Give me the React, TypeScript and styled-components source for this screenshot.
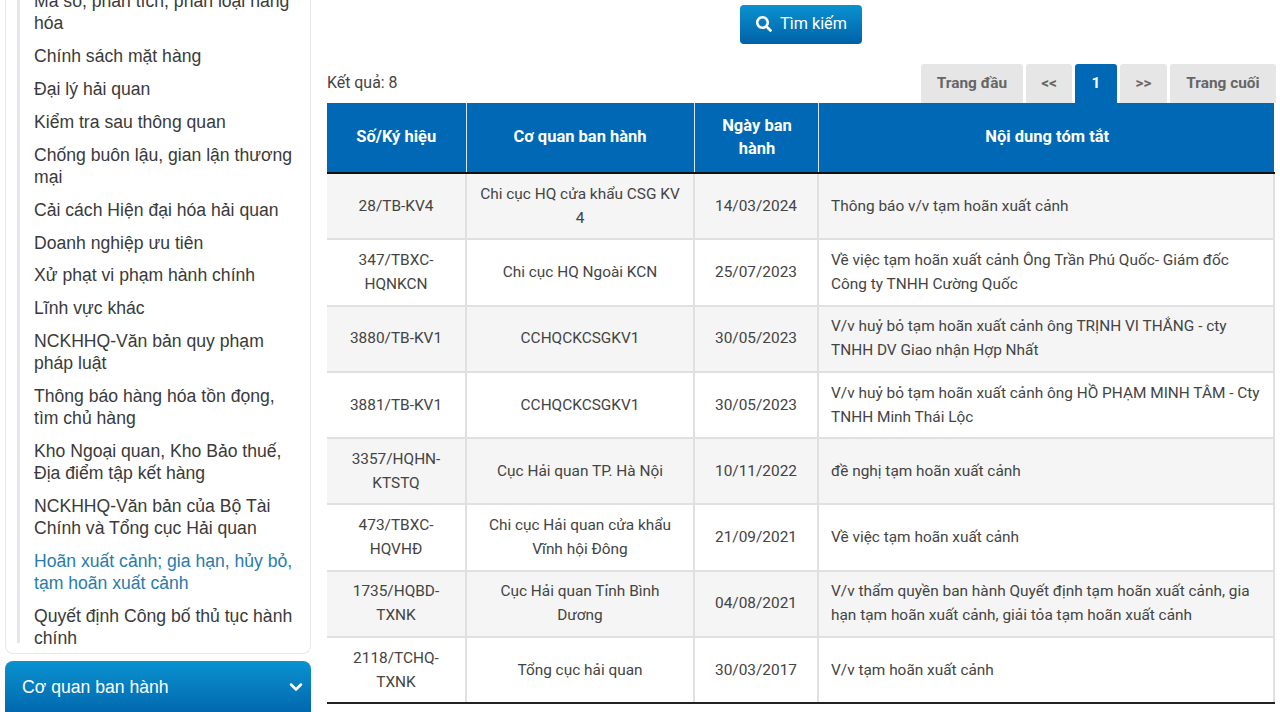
import styled, { createGlobalStyle } from 'styled-components'
import { FaSearch } from 'react-icons/fa'
import { FiChevronDown } from 'react-icons/fi'

const categories = [
    'Mã số, phân tích, phân loại hàng hóa',
    'Chính sách mặt hàng',
    'Đại lý hải quan',
    'Kiểm tra sau thông quan',
    'Chống buôn lậu, gian lận thương mại',
    'Cải cách Hiện đại hóa hải quan',
    'Doanh nghiệp ưu tiên',
    'Xử phạt vi phạm hành chính',
    'Lĩnh vực khác',
    'NCKHHQ-Văn bản quy phạm pháp luật',
    'Thông báo hàng hóa tồn đọng, tìm chủ hàng',
    'Kho Ngoại quan, Kho Bảo thuế, Địa điểm tập kết hàng',
    'NCKHHQ-Văn bản của Bộ Tài Chính và Tổng cục Hải quan',
    'Hoãn xuất cảnh; gia hạn, hủy bỏ, tạm hoãn xuất cảnh',
    'Quyết định Công bố thủ tục hành chính',
]

const ACTIVE_CATEGORY = 'Hoãn xuất cảnh; gia hạn, hủy bỏ, tạm hoãn xuất cảnh'

const pages = [
    { label: 'Trang đầu', width: 102 },
    { label: '<<', width: 46 },
    { label: '1', width: 42, active: true },
    { label: '>>', width: 47 },
    { label: 'Trang cuối', width: 106 },
]

const rows = [
    ['28/TB-KV4', 'Chi cục HQ cửa khẩu CSG KV 4', '14/03/2024', 'Thông báo v/v tạm hoãn xuất cảnh'],
    ['347/TBXC-HQNKCN', 'Chi cục HQ Ngoài KCN', '25/07/2023', 'Về việc tạm hoãn xuất cảnh Ông Trần Phú Quốc- Giám đốc Công ty TNHH Cường Quốc'],
    ['3880/TB-KV1', 'CCHQCKCSGKV1', '30/05/2023', 'V/v huỷ bỏ tạm hoãn xuất cảnh ông TRỊNH VI THẮNG - cty TNHH DV Giao nhận Hợp Nhất'],
    ['3881/TB-KV1', 'CCHQCKCSGKV1', '30/05/2023', 'V/v huỷ bỏ tạm hoãn xuất cảnh ông HỒ PHẠM MINH TÂM - Cty TNHH Minh Thái Lộc'],
    ['3357/HQHN-KTSTQ', 'Cục Hải quan TP. Hà Nội', '10/11/2022', 'đề nghị tạm hoãn xuất cảnh'],
    ['473/TBXC-HQVHĐ', 'Chi cục Hải quan cửa khẩu Vĩnh hội Đông', '21/09/2021', 'Về việc tạm hoãn xuất cảnh'],
    ['1735/HQBD-TXNK', 'Cục Hải quan Tỉnh Bình Dương', '04/08/2021', 'V/v thẩm quyền ban hành Quyết định tạm hoãn xuất cảnh, gia hạn tạm hoãn xuất cảnh, giải tỏa tạm hoãn xuất cảnh'],
    ['2118/TCHQ-TXNK', 'Tổng cục hải quan', '30/03/2017', 'V/v tạm hoãn xuất cảnh'],
]

export default function App() {
    return (
        <Page>
            <GlobalStyle />
            <Sidebar>
                <CategoryCard>
                    <CategoryList>
                        {categories.map((name) => (
                            <CategoryItem key={name} $active={name === ACTIVE_CATEGORY}>
                                {name}
                            </CategoryItem>
                        ))}
                    </CategoryList>
                </CategoryCard>
                <AccordionHeader>
                    Cơ quan ban hành
                    <FiChevronDown size={20} strokeWidth={3} />
                </AccordionHeader>
            </Sidebar>
            <Main>
                <SearchRow>
                    <SearchButton>
                        <FaSearch size={16} />
                        Tìm kiếm
                    </SearchButton>
                </SearchRow>
                <Toolbar>
                    <ResultCount>Kết quả: 8</ResultCount>
                    <Pagination>
                        {pages.map((page) => (
                            <PageTab key={page.label} $active={page.active} $width={page.width}>
                                {page.label}
                            </PageTab>
                        ))}
                    </Pagination>
                </Toolbar>
                <ResultTable>
                    <colgroup>
                        <col width={139} />
                        <col width={228} />
                        <col width={124} />
                        <col />
                    </colgroup>
                    <thead>
                        <tr>
                            <HeadCell>Số/Ký hiệu</HeadCell>
                            <HeadCell>Cơ quan ban hành</HeadCell>
                            <HeadCell>Ngày ban hành</HeadCell>
                            <HeadCell>Nội dung tóm tắt</HeadCell>
                        </tr>
                    </thead>
                    <tbody>
                        {rows.map((row) => (
                            <Row key={row[0]}>
                                <Cell>{row[0]}</Cell>
                                <Cell>{row[1]}</Cell>
                                <Cell>{row[2]}</Cell>
                                <SummaryCell>{row[3]}</SummaryCell>
                            </Row>
                        ))}
                    </tbody>
                </ResultTable>
            </Main>
        </Page>
    )
}

const GlobalStyle = createGlobalStyle`
    html, body {
        margin: 0;
        height: 712px;
        overflow: hidden;
        background: #fff;
    }
    * {
        box-sizing: border-box;
    }
`

const Page = styled.div`
    display: flex;
    align-items: flex-start;
    gap: 16px;
    width: 1280px;
    height: 712px;
    padding-left: 5px;
    overflow: hidden;
`

const Sidebar = styled.aside`
    display: flex;
    flex-direction: column;
    gap: 7px;
    flex: none;
    width: 306px;
    margin-top: -10px;
`

const CategoryCard = styled.div`
    flex: none;
    height: 664px;
    padding-left: 11px;
    padding-right: 8px;
    background: #fff;
    border: 1px solid #e8e8e8;
    border-top: 0;
    border-radius: 0 0 8px 8px;
`

const CategoryList = styled.ul`
    height: 653px;
    margin: 0;
    padding: 0 0 0 14px;
    list-style: none;
    border-left: 3px solid #e3e6ea;
`

const CategoryItem = styled.li<{ $active?: boolean }>`
    margin-bottom: 10.93px;
    font-family: 'Liberation Sans', Arial, sans-serif;
    font-size: 17.6px;
    line-height: 22px;
    color: ${(p) => (p.$active ? '#2a7bab' : '#3a3a3a')};
`

const AccordionHeader = styled.div`
    display: flex;
    align-items: center;
    justify-content: space-between;
    flex: none;
    height: 60px;
    padding: 0 5px 8px 17px;
    font-family: 'Liberation Sans', Arial, sans-serif;
    font-size: 17.6px;
    color: #fff;
    background: linear-gradient(#0a92d0, #0061a8);
    border-radius: 8px 8px 0 0;
`

const Main = styled.main`
    flex: none;
    width: 948px;
    font-family: Roboto, sans-serif;
    font-size: 15.4px;
    color: #444;
`

const SearchRow = styled.div`
    display: flex;
    justify-content: center;
    padding-top: 5px;
`

const SearchButton = styled.button`
    display: flex;
    align-items: center;
    justify-content: center;
    gap: 8px;
    width: 122px;
    height: 39px;
    padding: 0 0 2px 1px;
    font-family: Roboto, sans-serif;
    font-size: 16.2px;
    color: #fff;
    background: linear-gradient(#0a92d0, #0061a8);
    border: 0;
    border-radius: 4px;
`

const Toolbar = styled.div`
    display: flex;
    align-items: flex-start;
    justify-content: space-between;
    height: 39px;
    margin-top: 20px;
`

const ResultCount = styled.span`
    font-size: 15.9px;
    line-height: 37px;
    color: #444;
`

const Pagination = styled.div`
    display: flex;
    gap: 3px;
    margin-right: -1px;
`

const PageTab = styled.span<{ $active?: boolean; $width: number }>`
    width: ${(p) => p.$width}px;
    height: 39px;
    font-size: 15.4px;
    font-weight: 700;
    line-height: 38px;
    text-align: center;
    color: ${(p) => (p.$active ? '#fff' : '#666')};
    background: ${(p) => (p.$active ? '#0068b4' : '#e6e6e6')};
    border-radius: 3px 3px 0 0;
`

const ResultTable = styled.table`
    width: 948px;
    table-layout: fixed;
    border-collapse: collapse;
`

const HeadCell = styled.th`
    height: 70px;
    padding: 0 12px 2px;
    font-size: 16.5px;
    font-weight: 700;
    line-height: 23px;
    color: #fff;
    background: #0068b4;
    border-bottom: 2px solid #111;
    border-left: 1px solid #d5e6f3;

    &:first-child {
        border-left: 0;
    }

    &:nth-child(n + 3) {
        padding-left: 14px;
    }
`

const Row = styled.tr`
    &:nth-child(odd) {
        background: #f5f5f5;
    }

    &:last-child td {
        border-bottom: 2px solid #222;
    }
`

const Cell = styled.td`
    height: 66.3px;
    padding: 0 12px 1px;
    line-height: 24px;
    text-align: center;
    border: 2px solid #e0e0e0;

    &:first-child {
        border-left: 0;
    }
`

const SummaryCell = styled(Cell)`
    text-align: left;
`
